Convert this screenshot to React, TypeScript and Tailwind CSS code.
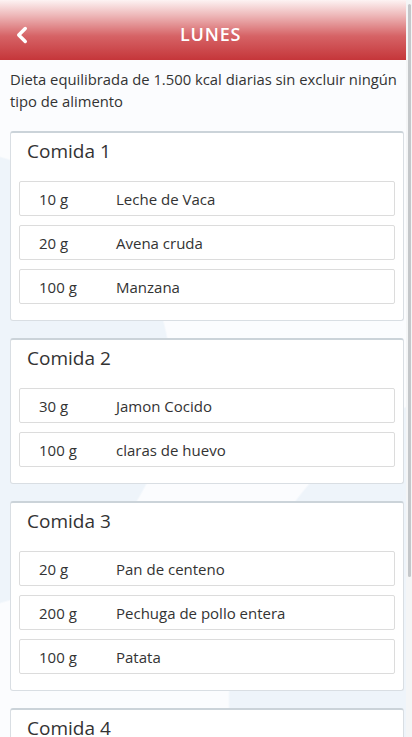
import { ChevronLeft } from 'lucide-react';

type Item = { qty: string; name: string };
type Meal = { title: string; items: Item[] };

const meals: Meal[] = [
  {
    title: 'Comida 1',
    items: [
      { qty: '10 g', name: 'Leche de Vaca' },
      { qty: '20 g', name: 'Avena cruda' },
      { qty: '100 g', name: 'Manzana' },
    ],
  },
  {
    title: 'Comida 2',
    items: [
      { qty: '30 g', name: 'Jamon Cocido' },
      { qty: '100 g', name: 'claras de huevo' },
    ],
  },
  {
    title: 'Comida 3',
    items: [
      { qty: '20 g', name: 'Pan de centeno' },
      { qty: '200 g', name: 'Pechuga de pollo entera' },
      { qty: '100 g', name: 'Patata' },
    ],
  },
  { title: 'Comida 4', items: [] },
];

const MealCard = ({ meal }: { meal: Meal }) => (
  <div className="bg-white border border-[#d9dee3] border-t-2 border-t-[#cbd3d9] rounded-[3px] pt-[6px] pb-[16px] px-[8px]">
    <h2 className="pl-[8px] text-[19px] leading-[24px] text-[#333333]">{meal.title}</h2>
    <div className="mt-[18px] flex flex-col gap-[9px]">
      {meal.items.map((item) => (
        <div
          key={item.name}
          className="h-[35px] flex items-center border border-[#dcdcdc] rounded-[2px] bg-white pl-[19px] pt-[2px] text-[15px] text-[#333333]"
        >
          <span className="w-[77px] shrink-0">{item.qty}</span>
          <span>{item.name}</span>
        </div>
      ))}
    </div>
  </div>
);

export default function App() {
  return (
    <div
      className="relative h-[737px] w-[412px] overflow-hidden flex bg-[#fbfcfe] bg-[radial-gradient(circle_at_-60px_380px,#eef4fa_0,#eef4fa_230px,transparent_232px),radial-gradient(circle_at_560px_700px,#eef4fa_0,#eef4fa_330px,transparent_332px)]"
      style={{ fontFamily: '"Open Sans", "Liberation Sans", sans-serif' }}
    >
      {/* Main column */}
      <div className="flex-1 min-w-0 flex flex-col">
        {/* Header */}
        <header className="h-[60px] shrink-0 flex items-center pt-[9px] bg-[linear-gradient(to_bottom,#fdf3f3_0%,#eeb9ba_25%,#d66366_60%,#c5363a_100%)]">
          <button className="pl-[9px] text-white">
            <ChevronLeft size={26} strokeWidth={3.2} />
          </button>
          <h1 className="ml-[145px] text-white text-[18px] font-semibold tracking-[0.8px]">LUNES</h1>
        </header>

        {/* Description */}
        <p className="pt-[8px] pl-[10px] text-[14.8px] leading-[22px] text-[#333333]">
          Dieta equilibrada de 1.500 kcal diarias sin excluir ningún tipo de alimento
        </p>

        {/* Meals */}
        <div className="mt-[19px] pl-[10px] pr-[2px] flex flex-col gap-[17px]">
          {meals.map((meal) => (
            <MealCard key={meal.title} meal={meal} />
          ))}
        </div>
      </div>

      {/* Scrollbar */}
      <div className="w-[6px] shrink-0 bg-[#f4f5f6] flex justify-center pt-[4px]">
        <div className="w-[3px] h-[573px] rounded-full bg-[#c4c7ca]" />
      </div>
    </div>
  );
}
